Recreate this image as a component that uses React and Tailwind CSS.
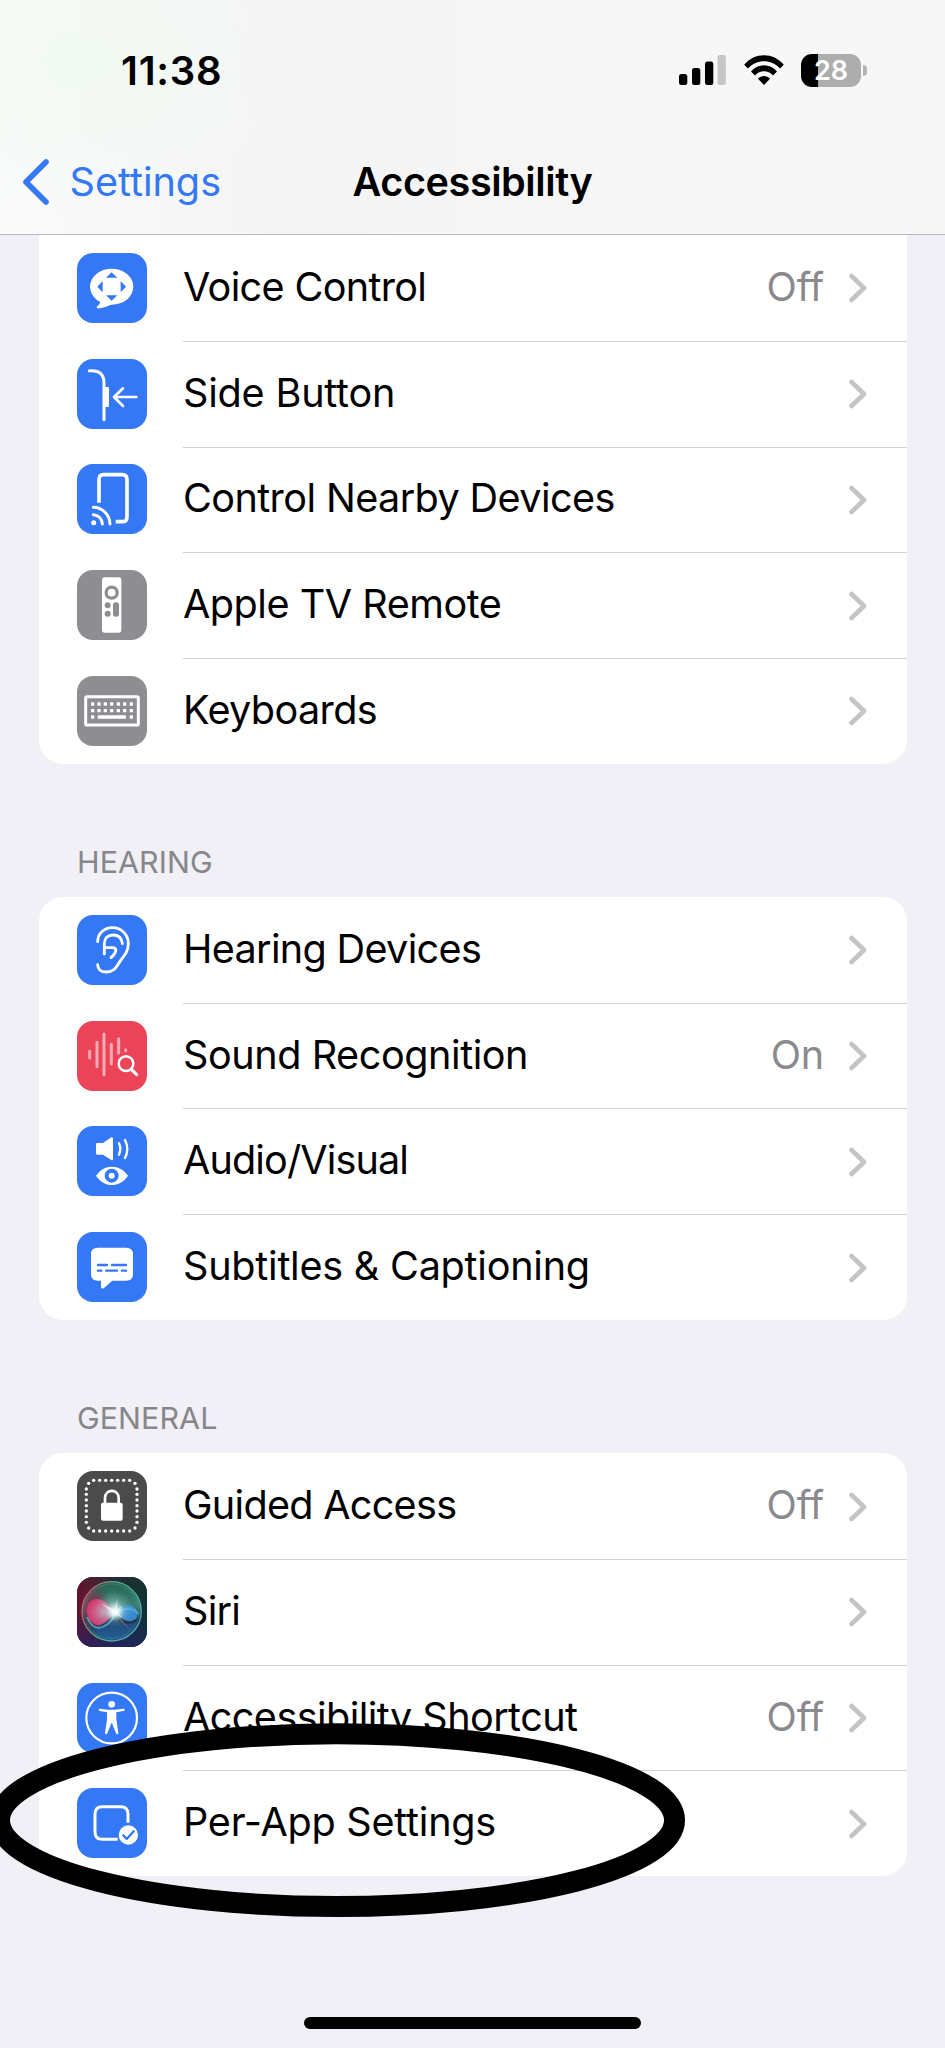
import { clsx } from 'clsx'

function VoiceControlIcon() {
  return (
    <>
      <ellipse cx="104" cy="101" rx="65" ry="54" fill="#fff" />
      <path d="M68 140 C72 150 66 156 60 160 C57 165 61 168 68 166 C84 163 96 158 106 152 Z" fill="#fff" />
      <path d="M104 58 L121 74 H87 Z M104 143 L121 127 H87 Z M61 101 L77 84 V118 Z M147 101 L131 84 V118 Z" fill="#3478f6" />
    </>
  )
}

function SideButtonIcon() {
  return (
    <g fill="none" stroke="#fff" strokeWidth="9" strokeLinecap="round" strokeLinejoin="round">
      <path d="M37 35 H44 C70 35 81 48 81 72 V182" />
      <path d="M83 84 H93 Q96 84 96 87 V141 Q96 144 93 144 H83 Z" fill="#fff" stroke="none" />
      <path d="M112 114 H178 M138 88 L111 114 L138 141" strokeWidth="8" />
    </g>
  )
}

function NearbyDevicesIcon() {
  return (
    <g fill="none" stroke="#fff" strokeLinecap="round">
      <path
        d="M66 116 V46 Q66 32 80 32 H136 Q150 32 150 46 V158 Q150 173 136 173 H116"
        strokeWidth="11"
        strokeLinecap="butt"
      />
      <path d="M49 152 A28 28 0 0 1 76 180 M49 130 A51 51 0 0 1 99 180" strokeWidth="9" />
      <circle cx="50" cy="176" r="7.5" fill="#fff" stroke="none" />
    </g>
  )
}

function RemoteIcon() {
  return (
    <>
      <rect x="75" y="22" width="58" height="166" rx="8" fill="#fff" />
      <circle cx="104" cy="68" r="16.5" fill="none" stroke="#8e8d92" strokeWidth="10" />
      <circle cx="92" cy="106" r="9" fill="#8e8d92" />
      <circle cx="92" cy="131" r="9" fill="#8e8d92" />
      <rect x="108" y="97" width="18" height="43" rx="8" fill="#8e8d92" />
    </>
  )
}

function KeyboardIcon() {
  const keys = [47, 66, 85, 104, 124, 143, 163]

  return (
    <g fill="#fff">
      <rect x="26" y="62" width="158" height="85" rx="4" fill="none" stroke="#fff" strokeWidth="9" />
      {keys.map((x) => (
        <g key={x}>
          <rect x={x - 5} y="79" width="10" height="10" rx="2" />
          <rect x={x - 5} y="99" width="10" height="10" rx="2" />
        </g>
      ))}
      <rect x="42" y="118" width="10" height="10" rx="2" />
      <rect x="62" y="118" width="85" height="10" rx="2" />
      <rect x="158" y="118" width="10" height="10" rx="2" />
    </g>
  )
}

function EarIcon() {
  return (
    <g fill="none" stroke="#fff" strokeWidth="8.5" strokeLinecap="round" strokeLinejoin="round">
      <path d="M62 80 C62 55 82 38 106 38 C135 38 154 60 154 86 C154 110 142 121 131 136 C121 150 115 171 88 171 C72 171 62 163 62 149" />
      <path d="M136 86 C134 68 123 60 108 60 C92 60 82 70 82 86 V117" />
      <path d="M82 98 H106 C122 98 119 113 102 128" />
    </g>
  )
}

function SoundIcon() {
  return (
    <g fill="none" stroke="#fff" strokeLinecap="round">
      <path
        d="M38 91 V111 M60 64 V137 M81 39 V161 M103 70 V129 M125 53 V96 M146 86 V89"
        strokeWidth="9"
        opacity="0.55"
      />
      <circle cx="147" cy="128" r="26" fill="#eb4459" stroke="none" />
      <circle cx="147" cy="128" r="22" strokeWidth="7.5" />
      <path d="M163 145 L179 161" strokeWidth="9" />
    </g>
  )
}

function AudioVisualIcon() {
  return (
    <g fill="none" stroke="#fff" strokeLinecap="round">
      <path d="M60 51 H78 L103 34 Q108 32 108 38 V98 Q108 104 103 102 L78 86 H60 Q57 86 57 82 V55 Q57 51 60 51 Z" fill="#fff" stroke="none" />
      <path d="M126 52 Q134 68 126 86 M144 42 Q158 69 144 96" strokeWidth="7" />
      <path d="M57 149 C70 131 86 122 104 122 C124 122 140 131 153 149 C140 168 124 177 104 177 C86 177 70 168 57 149 Z" fill="#fff" stroke="none" />
      <circle cx="104" cy="149" r="15" stroke="#3478f6" strokeWidth="12" />
    </g>
  )
}

function SubtitlesIcon() {
  return (
    <>
      <path d="M62 47 H148 Q168 47 168 67 V126 Q168 146 148 146 H106 L80 169 Q72 172 72 164 V146 H62 Q42 146 42 126 V67 Q42 47 62 47 Z" fill="#fff" />
      <path d="M63 99 H90 M105 99 H147 M63 116 H73 M88 116 H120 M135 116 H147" stroke="#3478f6" strokeWidth="7" strokeLinecap="round" />
    </>
  )
}

function GuidedAccessIcon() {
  const across = [50, 68, 86, 104, 122, 140, 158]
  const down = [54, 70, 87, 104, 120, 137, 154]

  return (
    <g fill="#fff">
      {across.map((x) => (
        <g key={x}>
          <circle cx={x} cy="28" r="5" />
          <circle cx={x} cy="180" r="5" />
        </g>
      ))}
      {down.map((y) => (
        <g key={y}>
          <circle cx="28" cy={y} r="5" />
          <circle cx="180" cy={y} r="5" />
        </g>
      ))}
      <circle cx="35" cy="37" r="5" />
      <circle cx="174" cy="37" r="5" />
      <circle cx="35" cy="171" r="5" />
      <circle cx="174" cy="171" r="5" />
      <rect x="72" y="95" width="65" height="54" rx="6" />
      <path d="M84 98 V82 C84 52 125 52 125 82 V98" fill="none" stroke="#fff" strokeWidth="8" />
    </g>
  )
}

function SiriIcon() {
  return (
    <>
      <defs>
        <linearGradient id="siri-bg" x1="0" y1="0" x2="1" y2="0">
          <stop offset="0" stopColor="#64122b" />
          <stop offset="0.5" stopColor="#2b2a3a" />
          <stop offset="1" stopColor="#0f342f" />
        </linearGradient>
        <linearGradient id="siri-floor" x1="0" y1="0" x2="0" y2="1">
          <stop offset="0.45" stopColor="#1c2c6c" stopOpacity="0" />
          <stop offset="1" stopColor="#20206c" stopOpacity="0.7" />
        </linearGradient>
        <linearGradient id="siri-orb" x1="0" y1="0" x2="0" y2="1">
          <stop offset="0" stopColor="#23644f" />
          <stop offset="0.4" stopColor="#3c7f74" />
          <stop offset="0.65" stopColor="#1d3446" />
          <stop offset="1" stopColor="#1e5690" />
        </linearGradient>
        <linearGradient id="siri-rim" x1="0" y1="0.2" x2="1" y2="0.6">
          <stop offset="0" stopColor="#d1596c" />
          <stop offset="0.5" stopColor="#4fb386" />
          <stop offset="1" stopColor="#4fa9bb" />
        </linearGradient>
        <radialGradient id="siri-pink" cx="0.6" cy="0.5" r="0.6">
          <stop offset="0" stopColor="#c997b4" />
          <stop offset="1" stopColor="#e0356e" />
        </radialGradient>
        <radialGradient id="siri-glow">
          <stop offset="0" stopColor="#fff" />
          <stop offset="0.3" stopColor="#eaffff" stopOpacity="0.9" />
          <stop offset="1" stopColor="#a5f0e0" stopOpacity="0" />
        </radialGradient>
        <radialGradient id="siri-red">
          <stop offset="0" stopColor="#a21f49" stopOpacity="0.95" />
          <stop offset="1" stopColor="#7c1f45" stopOpacity="0" />
        </radialGradient>
      </defs>
      <rect width="210" height="210" fill="url(#siri-bg)" />
      <rect width="210" height="210" fill="url(#siri-floor)" />
      <circle cx="104" cy="103" r="89" fill="url(#siri-orb)" />
      <ellipse cx="50" cy="88" rx="50" ry="70" fill="url(#siri-red)" />
      <path d="M48 150 C78 166 96 136 112 116 C126 138 146 150 178 134 C158 186 80 208 48 150 Z" fill="#2b67ab" opacity="0.45" />
      <path d="M112 108 C98 84 82 66 58 66 C34 68 26 90 30 112 C36 136 54 148 70 144 C88 138 100 122 112 108 Z" fill="url(#siri-pink)" opacity="0.9" />
      <path d="M30 120 C46 164 84 164 116 112" fill="none" stroke="#6dc1d8" strokeWidth="6" opacity="0.7" />
      <path d="M116 106 C134 84 166 74 180 100 C188 122 170 136 152 132 C136 128 126 118 116 106 Z" fill="#3d8fdd" opacity="0.9" />
      <path d="M118 108 C140 92 168 90 186 112" fill="none" stroke="#72d2e4" strokeWidth="4" opacity="0.6" />
      <path d="M112 108 L162 160 L134 134 Z" fill="#dd7795" opacity="0.8" />
      <circle cx="112" cy="96" r="54" fill="url(#siri-glow)" opacity="0.4" />
      <circle cx="114" cy="104" r="30" fill="url(#siri-glow)" />
      <path d="M74 80 L112 97 L122 62 L120 98 L138 84 L124 106 L134 122 L113 112 L104 126 L105 108 Z" fill="#fff" opacity="0.5" />
      <circle cx="104" cy="103" r="89" fill="none" stroke="url(#siri-rim)" strokeWidth="4" />
      <circle cx="104" cy="103" r="82" fill="none" stroke="url(#siri-rim)" strokeWidth="5" opacity="0.25" />
    </>
  )
}

function AccessibilityIcon() {
  return (
    <>
      <circle cx="104" cy="105" r="76" fill="none" stroke="#fff" strokeWidth="6.5" />
      <circle cx="104" cy="64" r="10" fill="#fff" />
      <path
        d="M68 77 L94 80 H114 L139 77 Q143 77 143 81 Q143 84 140 84 L118 88 V108 L124 150 Q123 155 118 153 L105 121 H103 L90 153 Q85 155 84 150 L90 108 V88 L68 84 Q65 84 65 81 Q65 77 68 77 Z"
        fill="#fff"
      />
    </>
  )
}

function PerAppIcon() {
  return (
    <g fill="none" stroke="#fff" strokeLinecap="round" strokeLinejoin="round">
      <path d="M153 104 V78 Q153 56 131 56 H76 Q54 56 54 78 V132 Q54 154 76 154 H122" strokeWidth="9" strokeLinecap="butt" />
      <circle cx="154" cy="141" r="29" fill="#fff" stroke="none" />
      <path d="M139 142 L149 153 L170 130" stroke="#3478f6" strokeWidth="7" />
    </g>
  )
}

const groups = [
  {
    title: null,
    rows: [
      { label: 'Voice Control', value: 'Off', icon: VoiceControlIcon, color: 'bg-[#3478f6]', tracking: 'tracking-[-0.017em]' },
      { label: 'Side Button', icon: SideButtonIcon, color: 'bg-[#3478f6]', tracking: 'tracking-[-0.005em]' },
      { label: 'Control Nearby Devices', icon: NearbyDevicesIcon, color: 'bg-[#3478f6]', tracking: 'tracking-[-0.015em]' },
      { label: 'Apple TV Remote', icon: RemoteIcon, color: 'bg-[#8e8d92]', tracking: 'tracking-[-0.012em]' },
      { label: 'Keyboards', icon: KeyboardIcon, color: 'bg-[#8e8d92]', tracking: 'tracking-[-0.016em]' },
    ],
  },
  {
    title: 'HEARING',
    rows: [
      { label: 'Hearing Devices', icon: EarIcon, color: 'bg-[#3478f6]', tracking: 'tracking-[-0.017em]' },
      { label: 'Sound Recognition', value: 'On', icon: SoundIcon, color: 'bg-[#eb4459]', tracking: 'tracking-[-0.011em]' },
      { label: 'Audio/Visual', icon: AudioVisualIcon, color: 'bg-[#3478f6]', tracking: 'tracking-[-0.022em]' },
      { label: 'Subtitles & Captioning', icon: SubtitlesIcon, color: 'bg-[#3478f6]', tracking: 'tracking-[-0.006em]' },
    ],
  },
  {
    title: 'GENERAL',
    rows: [
      { label: 'Guided Access', value: 'Off', icon: GuidedAccessIcon, color: 'bg-[#4b4b4b]', tracking: 'tracking-[-0.018em]' },
      { label: 'Siri', icon: SiriIcon, color: 'bg-[#2b2a3a]', tracking: 'tracking-[-0.018em]' },
      { label: 'Accessibility Shortcut', value: 'Off', icon: AccessibilityIcon, color: 'bg-[#3478f6]', tracking: 'tracking-[-0.014em]' },
      { label: 'Per-App Settings', icon: PerAppIcon, color: 'bg-[#3478f6]', tracking: 'tracking-[-0.006em]' },
    ],
  },
]

function StatusBar() {
  return (
    <div className="flex h-[141px] items-start justify-between pt-[46px] pr-[78px] pl-[121px]">
      <span className="text-[40px] leading-[49px] font-semibold tracking-[0.018em]">11:38</span>

      <div className="flex h-[48px] items-center">
        <svg className="h-[30px] w-[48px]" viewBox="0 0 48 30">
          <rect x="0" y="19" width="8.3" height="11" rx="2.5" />
          <rect x="13" y="13" width="8.3" height="17" rx="2.5" />
          <rect x="26" y="6.5" width="8.3" height="23.5" rx="2.5" />
          <rect x="38.5" y="0" width="8.3" height="30" rx="2.5" fill="#c6c6c6" />
        </svg>

        <svg className="ml-[16px] h-[30px] w-[42px]" viewBox="0 0 42 30">
          <path d="M1.2 9.8 C12 -2.8 30 -2.8 40.8 9.8 L37 13.5 C28 3.8 14 3.8 5 13.5 Z" strokeLinejoin="round" />
          <path d="M8 16.6 C15 8.2 27 8.2 34 16.6 L30 20.4 C25 14.8 17 14.8 12 20.4 Z" />
          <path d="M15 23.8 C18.5 20 23.5 20 27 23.8 L21 30 Z" />
        </svg>

        <div className="ml-[16px] flex h-[33px] w-[60px] items-center justify-center rounded-[11px] bg-[linear-gradient(90deg,#000_17px,#adadad_17px)]">
          <span className="text-[27px] leading-[33px] font-semibold text-white">28</span>
        </div>
        <div className="ml-[2px] h-[11px] w-[4px] rounded-r-full bg-[#b4b4b4]" />
      </div>
    </div>
  )
}

function Header() {
  return (
    <header className="h-[235px] border-b border-[#b8b8b8] bg-[#f6f6f6] bg-[radial-gradient(ellipse_230px_150px_at_80px_60px,#f2f9f3,transparent),linear-gradient(90deg,#f9fbfa,#f4f4f4_30%,#f6f6f6_60%,#f7f7f8)]">
      <StatusBar />

      <div className="grid h-[82px] grid-cols-[1fr_auto_1fr] items-center text-[39.6px] leading-[48px]">
        <div className="flex items-center gap-[20px] pl-[21.5px] text-[#3478f6]">
          <svg className="h-[46px] w-[28px]" viewBox="0 0 28 46">
            <path d="M24 3 L4 23 L24 43" fill="none" stroke="currentColor" strokeWidth="5.6" strokeLinecap="round" strokeLinejoin="round" />
          </svg>
          <span>Settings</span>
        </div>
        <h1 className="font-semibold tracking-[-0.011em]">Accessibility</h1>
      </div>
    </header>
  )
}

function Row({ row, first }) {
  const Icon = row.icon

  return (
    <div className="flex h-[105.75px] items-center pl-[38.5px]">
      <div className={clsx('h-[70px] w-[70px] shrink-0 overflow-hidden rounded-[16px]', row.color)}>
        <svg className="h-full w-full" viewBox="0 0 210 210">
          <Icon />
        </svg>
      </div>

      <div
        className={clsx(
          'ml-[36px] flex h-full flex-1 items-center border-t pr-[39.5px]',
          first ? 'border-transparent' : 'border-[#d3d3d5]'
        )}
      >
        <span className={clsx('flex-1 pb-[3px] text-[39.6px] leading-[48px]', row.tracking)}>{row.label}</span>
        {row.value && (
          <span className="mr-[25px] pb-[3px] text-[39.6px] leading-[48px] tracking-[-0.005em] text-[#8a8a8e]">
            {row.value}
          </span>
        )}
        <svg className="h-[30px] w-[18px]" viewBox="0 0 18 30">
          <path d="M2.5 3 L15 15 L2.5 27" fill="none" stroke="#c4c4c6" strokeWidth="4.6" strokeLinecap="round" strokeLinejoin="round" />
        </svg>
      </div>
    </div>
  )
}

export default function App() {
  return (
    <div className="relative flex h-[2048px] w-[945px] flex-col overflow-hidden bg-[#f0f0f6] font-['Inter',sans-serif] text-black">
      <Header />

      <main className="flex-1">
        {groups.map((group, i) => (
          <section key={i}>
            {group.title && (
              <h2 className="h-[133.2px] pt-[80px] pl-[77px] text-[30.4px] leading-[37px] tracking-[0.003em] text-[#87868b]">
                {group.title}
              </h2>
            )}
            <div className={clsx('mx-[38.5px] bg-white', group.title ? 'rounded-[24px]' : 'rounded-b-[24px]')}>
              {group.rows.map((row, j) => (
                <Row key={row.label} row={row} first={j === 0} />
              ))}
            </div>
          </section>
        ))}
      </main>

      <div className="mx-auto mb-[19px] h-[12px] w-[337px] rounded-full bg-black" />

      {/* hand-drawn highlight around the last row */}
      <svg className="pointer-events-none absolute top-[1710px] left-0 h-[220px] w-[700px]" viewBox="0 0 700 220">
        <ellipse cx="337" cy="110.2" rx="337.5" ry="86.4" fill="none" stroke="#000" strokeWidth="21" />
      </svg>
    </div>
  )
}
